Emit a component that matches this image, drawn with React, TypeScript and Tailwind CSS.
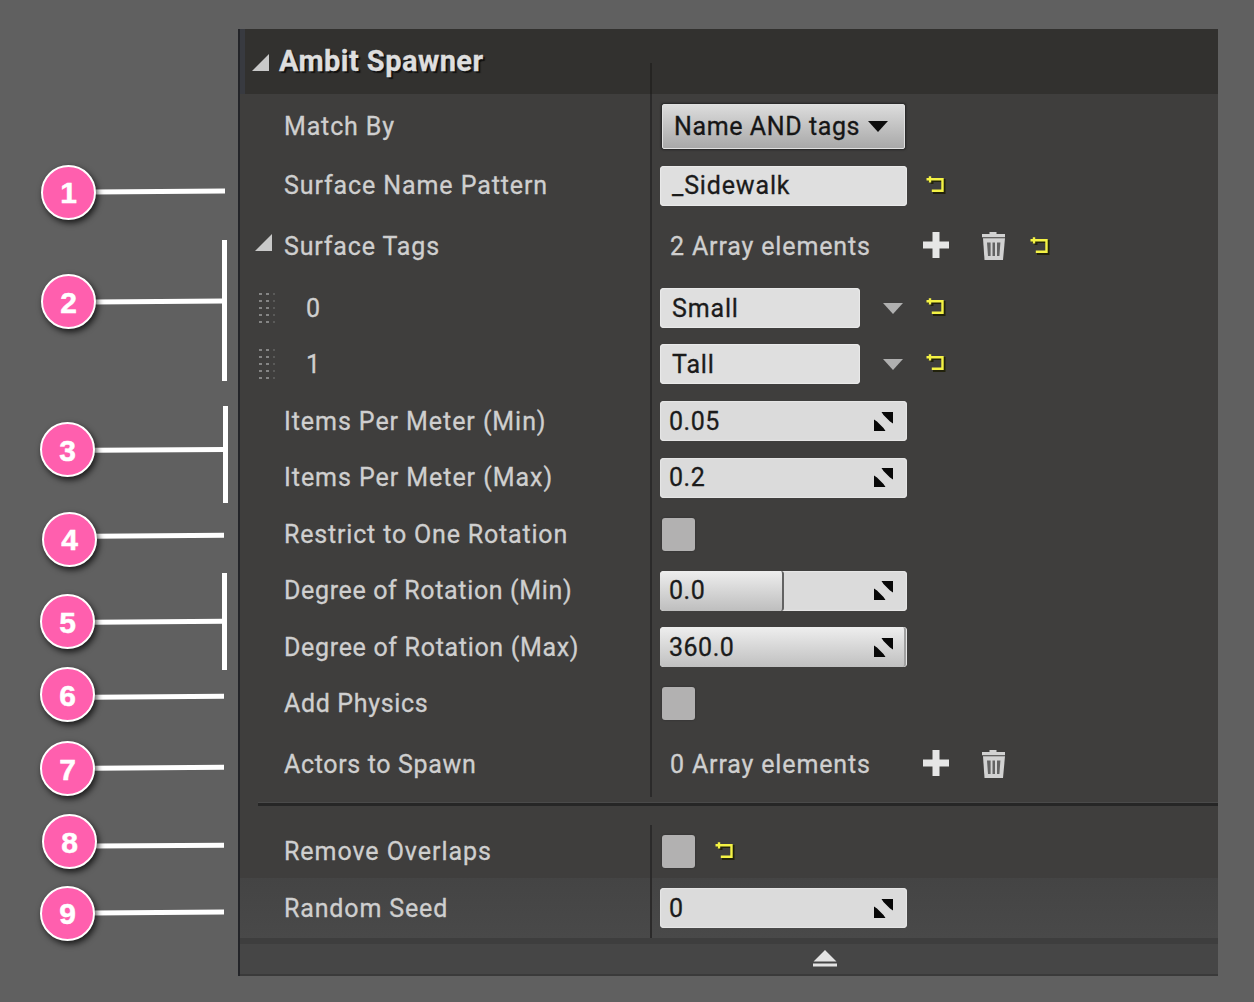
import type { ReactNode } from "react";

type Callout = { n: number; x: number; y: number; lineY: number; end: number; bracket?: [number, number] };

const callouts: Callout[] = [
  { n: 1, x: 68.5, y: 192, lineY: 191.5, end: 225 },
  { n: 2, x: 68.5, y: 301.5, lineY: 301.5, end: 224, bracket: [240, 381] },
  { n: 3, x: 67.5, y: 449.5, lineY: 449.8, end: 225, bracket: [406, 503] },
  { n: 4, x: 69.5, y: 539, lineY: 535.7, end: 224 },
  { n: 5, x: 67.5, y: 621.5, lineY: 621.7, end: 224, bracket: [573, 670] },
  { n: 6, x: 67.5, y: 694.5, lineY: 696.7, end: 224 },
  { n: 7, x: 67.5, y: 768.5, lineY: 767.7, end: 224 },
  { n: 8, x: 69.5, y: 841.5, lineY: 845.6, end: 224 },
  { n: 9, x: 67.5, y: 913, lineY: 912.5, end: 224 },
];

function Pin({ c }: { c: Callout }) {
  return (
    <div
      className="absolute flex h-[55px] w-[55px] items-center justify-center rounded-full border-2 border-white bg-[#ff5fae] font-['Liberation_Sans',Arial,sans-serif] text-[30px] leading-none font-bold text-white shadow-[2px_3px_6px_rgba(0,0,0,0.75)]"
      style={{ left: c.x - 27.5, top: c.y - 27.5 }}
    >
      <span className="translate-y-px [-webkit-text-stroke:0.5px_white]">{c.n}</span>
    </div>
  );
}

function Reset({ className = "" }: { className?: string }) {
  return (
    <svg width="24" height="24" viewBox="0 0 24 24" className={`shrink-0 ${className}`} fill="none">
      <path d="M4 6.5H20V18.5H9M8 4V10" stroke="#22220c" strokeWidth="3" />
      <path d="M2.5 5.2H18.5V16.8H7.8M6 2.2V8.4" stroke="#f4f244" strokeWidth="2.4" />
    </svg>
  );
}

function Plus() {
  return (
    <svg width="28" height="28" viewBox="0 0 28 28" className="-mt-[3px] ml-[50px] shrink-0">
      <path d="M10.5 1H17.5V10.5H27V17.5H17.5V27H10.5V17.5H1V10.5H10.5Z" fill="#e6e6e6" />
    </svg>
  );
}

function Trash() {
  return (
    <svg width="26" height="30" viewBox="0 0 26 30" className="-mt-px ml-[30px] shrink-0">
      <path d="M9.5 3V1H16.5V3H25V6.2H2V3Z" fill="#d2d2d2" />
      <path d="M3 7.2H25L23 29H4.5Z" fill="#d2d2d2" />
      <path d="M7 11.5L8 25H10.6V11.5ZM12.5 11.5H15V25H12.5ZM17 11.5H20.4L19.4 25H17Z" fill="#626262" />
    </svg>
  );
}

function Expander({ className = "" }: { className?: string }) {
  return (
    <svg width="18" height="17" viewBox="0 0 18 17" className={`absolute ${className}`}>
      <path d="M17 0V17H0Z" fill="#c9c9c9" />
    </svg>
  );
}

function Grip() {
  return (
    <div className="absolute left-[19px] grid grid-cols-3 gap-x-[4px] gap-y-[5px]">
      {Array.from({ length: 15 }, (_, i) => (
        <i key={i} className="h-[2px] w-[3px] bg-[#858585] nth-[3n]:w-[2px] nth-[3n]:opacity-40" />
      ))}
    </div>
  );
}

function TextBox({ value, narrow = false }: { value: string; narrow?: boolean }) {
  return (
    <div className={`flex h-[40px] items-center rounded-[4px] bg-[#dfdfdf] pl-[12px] text-[#1b1b1b] shadow-[inset_0_0_1px_1px_#eaeaea] ${narrow ? "w-[200px]" : "w-[247px]"}`}>
      <span>{value}</span>
    </div>
  );
}

function NumberBox({ value, fill }: { value: string; fill?: "half" | "full" }) {
  return (
    <div className="relative flex h-[40px] w-[247px] items-center justify-between overflow-hidden rounded-[4px] bg-[#dbdbdb] pr-[14px] pl-[9px] text-[#1b1b1b] shadow-[inset_0_0_1px_1px_#e6e6e6]">
      {fill === "half" && (
        <div className="absolute inset-y-0 left-0 w-[124px] rounded-[3px] border-r-2 border-[#626262] bg-linear-to-b from-[#eeeeee] to-[#bebebe]" />
      )}
      {fill === "full" && (
        <div className="absolute inset-y-0 left-0 w-[246px] rounded-[3px] border-r-2 border-[#a0a0a0] bg-linear-to-b from-[#eeeeee] to-[#c0c0c0]" />
      )}
      <span className="relative tracking-[0.5px]">{value}</span>
      <svg width="19" height="19" viewBox="0 0 19 19" className="relative">
        <path d="M7.5 0H19V11.5L16 9.5L9.5 3ZM0 7.5V19H11.5L9.5 16L3 9.5Z" fill="#080808" />
      </svg>
    </div>
  );
}

function CheckBox() {
  return <div className="ml-[2px] h-[33px] w-[33px] rounded-[3px] bg-[#b2b1b1] shadow-[0_0_2px_#2b2b2b]" />;
}

type RowProps = { label: string; h: string; children: ReactNode; left?: ReactNode; indent?: boolean; spacing?: string };

function Row({ label, h, children, left, indent = false, spacing = "" }: RowProps) {
  return (
    <div className={`flex ${h}`}>
      <div className="relative flex w-[412px] shrink-0 items-center border-r-2 border-[#2b2a2a]">
        {left}
        <span className={`${indent ? "pl-[66px]" : "pl-[44px]"} ${spacing}`}>{label}</span>
      </div>
      <div className="flex items-center pl-[8px]">{children}</div>
    </div>
  );
}

function DownArrow() {
  return (
    <svg width="20" height="11" viewBox="0 0 20 11" className="mr-[11px] ml-[23px]">
      <path d="M0 0H20L10 11Z" fill="#b0b0b0" />
    </svg>
  );
}

export default function App() {
  return (
    <div className="relative h-[1002px] w-[1254px] overflow-hidden bg-[#606060] pt-[29px] pl-[238px]">
      <svg className="absolute inset-0" width="238" height="1002" viewBox="0 0 238 1002" stroke="#fff" strokeWidth="5">
        {callouts.map((c) => (
          <g key={c.n}>
            <path d={`M94 ${c.lineY + 0.5}L${c.end} ${c.lineY - 0.4}`} />
            {c.bracket && <path d={`M${c.end + 0.5} ${c.bracket[0]}V${c.bracket[1]}`} />}
          </g>
        ))}
      </svg>
      {callouts.map((c) => (
        <Pin key={c.n} c={c} />
      ))}

      <div className="flex h-[947px] w-[980px] flex-col overflow-hidden border-l-2 border-[#232428] bg-[#3f3e3d] font-[Roboto,sans-serif] text-[25px] leading-none tracking-[0.85px] whitespace-nowrap text-[#cfcfcf] [-webkit-text-stroke:0.3px_currentColor]">
        <div className="relative flex h-[65px] shrink-0 border-l-[5px] border-[#383a40] bg-[#32312f]">
          <Expander className="top-[25px] left-[7px]" />
          <div className="flex w-[407px] flex-col">
            <h1 className="pt-[18px] pl-[34px] text-[29px] font-bold tracking-[0.45px] text-[#dedede] [text-shadow:2px_2px_1px_#111]">Ambit Spawner</h1>
          </div>
          <div className="mt-[34px] -ml-[2px] w-[2px] bg-[#252422]" />
        </div>

        <Row label="Match By" h="h-[65px]">
          <div className="ml-[2px] flex h-[45px] w-[243px] items-center rounded-[2px] border border-[#e0e0e0] bg-linear-to-b from-[#dcdcdc] to-[#a9a9a9] pl-[11px] text-[#161616] shadow-[0_0_2px_1px_#252525]">
            <span className="tracking-[0.6px]">Name AND tags</span>
            <svg width="20" height="11" viewBox="0 0 20 11" className="ml-[8px]">
              <path d="M0 0H20L10 11Z" fill="#0d0d0d" />
            </svg>
          </div>
        </Row>
        <Row label="Surface Name Pattern" h="h-[53px]" spacing="tracking-[0.9px]">
          <TextBox value="_Sidewalk" />
          <Reset className="ml-[17px]" />
        </Row>
        <Row label="Surface Tags" h="h-[69px]" left={<Expander className="top-[22px] left-[15px]" />}>
          <span className="w-[212px] pl-[10px]">2 Array elements</span>
          <Plus />
          <Trash />
          <Reset className="ml-[22px]" />
        </Row>
        <Row label="0" h="h-[54px]" indent left={<Grip />}>
          <TextBox value="Small" narrow />
          <DownArrow />
          <Reset className="ml-[10px]" />
        </Row>
        <Row label="1" h="h-[58px]" indent left={<Grip />}>
          <TextBox value="Tall" narrow />
          <DownArrow />
          <Reset className="ml-[10px]" />
        </Row>
        <Row label="Items Per Meter (Min)" h="h-[56.5px]" spacing="tracking-[0.93px]">
          <NumberBox value="0.05" />
        </Row>
        <Row label="Items Per Meter (Max)" h="h-[56.5px]" spacing="tracking-[0.95px]">
          <NumberBox value="0.2" />
        </Row>
        <Row label="Restrict to One Rotation" h="h-[56.5px]" spacing="tracking-[0.82px]">
          <CheckBox />
        </Row>
        <Row label="Degree of Rotation (Min)" h="h-[56.5px]" spacing="tracking-[0.65px]">
          <NumberBox value="0.0" fill="half" />
        </Row>
        <Row label="Degree of Rotation (Max)" h="h-[56.5px]" spacing="tracking-[0.68px]">
          <NumberBox value="360.0" fill="full" />
        </Row>
        <Row label="Add Physics" h="h-[56.5px]" spacing="tracking-[0.65px]">
          <CheckBox />
        </Row>
        <Row label="Actors to Spawn" h="h-[65px]" spacing="tracking-[0.65px]">
          <span className="w-[212px] pl-[10px]">0 Array elements</span>
          <Plus />
          <Trash />
        </Row>

        <div className="h-[28px] shrink-0 pt-[5px] pl-[18px]">
          <div className="h-[4px] border-t border-[#4a4a4a] bg-[#262626]" />
        </div>

        <Row label="Remove Overlaps" h="h-[53px]" spacing="tracking-[0.95px]">
          <CheckBox />
          <Reset className="ml-[18px]" />
        </Row>
        <div className="bg-linear-to-b from-[#444444] to-[#494949]">
          <Row label="Random Seed" h="h-[60px]">
            <NumberBox value="0" />
          </Row>
        </div>
        <div className="h-[6px] shrink-0 bg-[#3e3e3e]" />
        <div className="flex grow items-center border-b-2 border-[#3a3a3a] bg-[#464646] pb-[2px] pl-[573px]">
          <svg width="24" height="17" viewBox="0 0 24 17">
            <path d="M12 0L23.5 11.5H0.5ZM0 13.5H24V16.5H0Z" fill="#e4e4e4" />
          </svg>
        </div>
      </div>
    </div>
  );
}
